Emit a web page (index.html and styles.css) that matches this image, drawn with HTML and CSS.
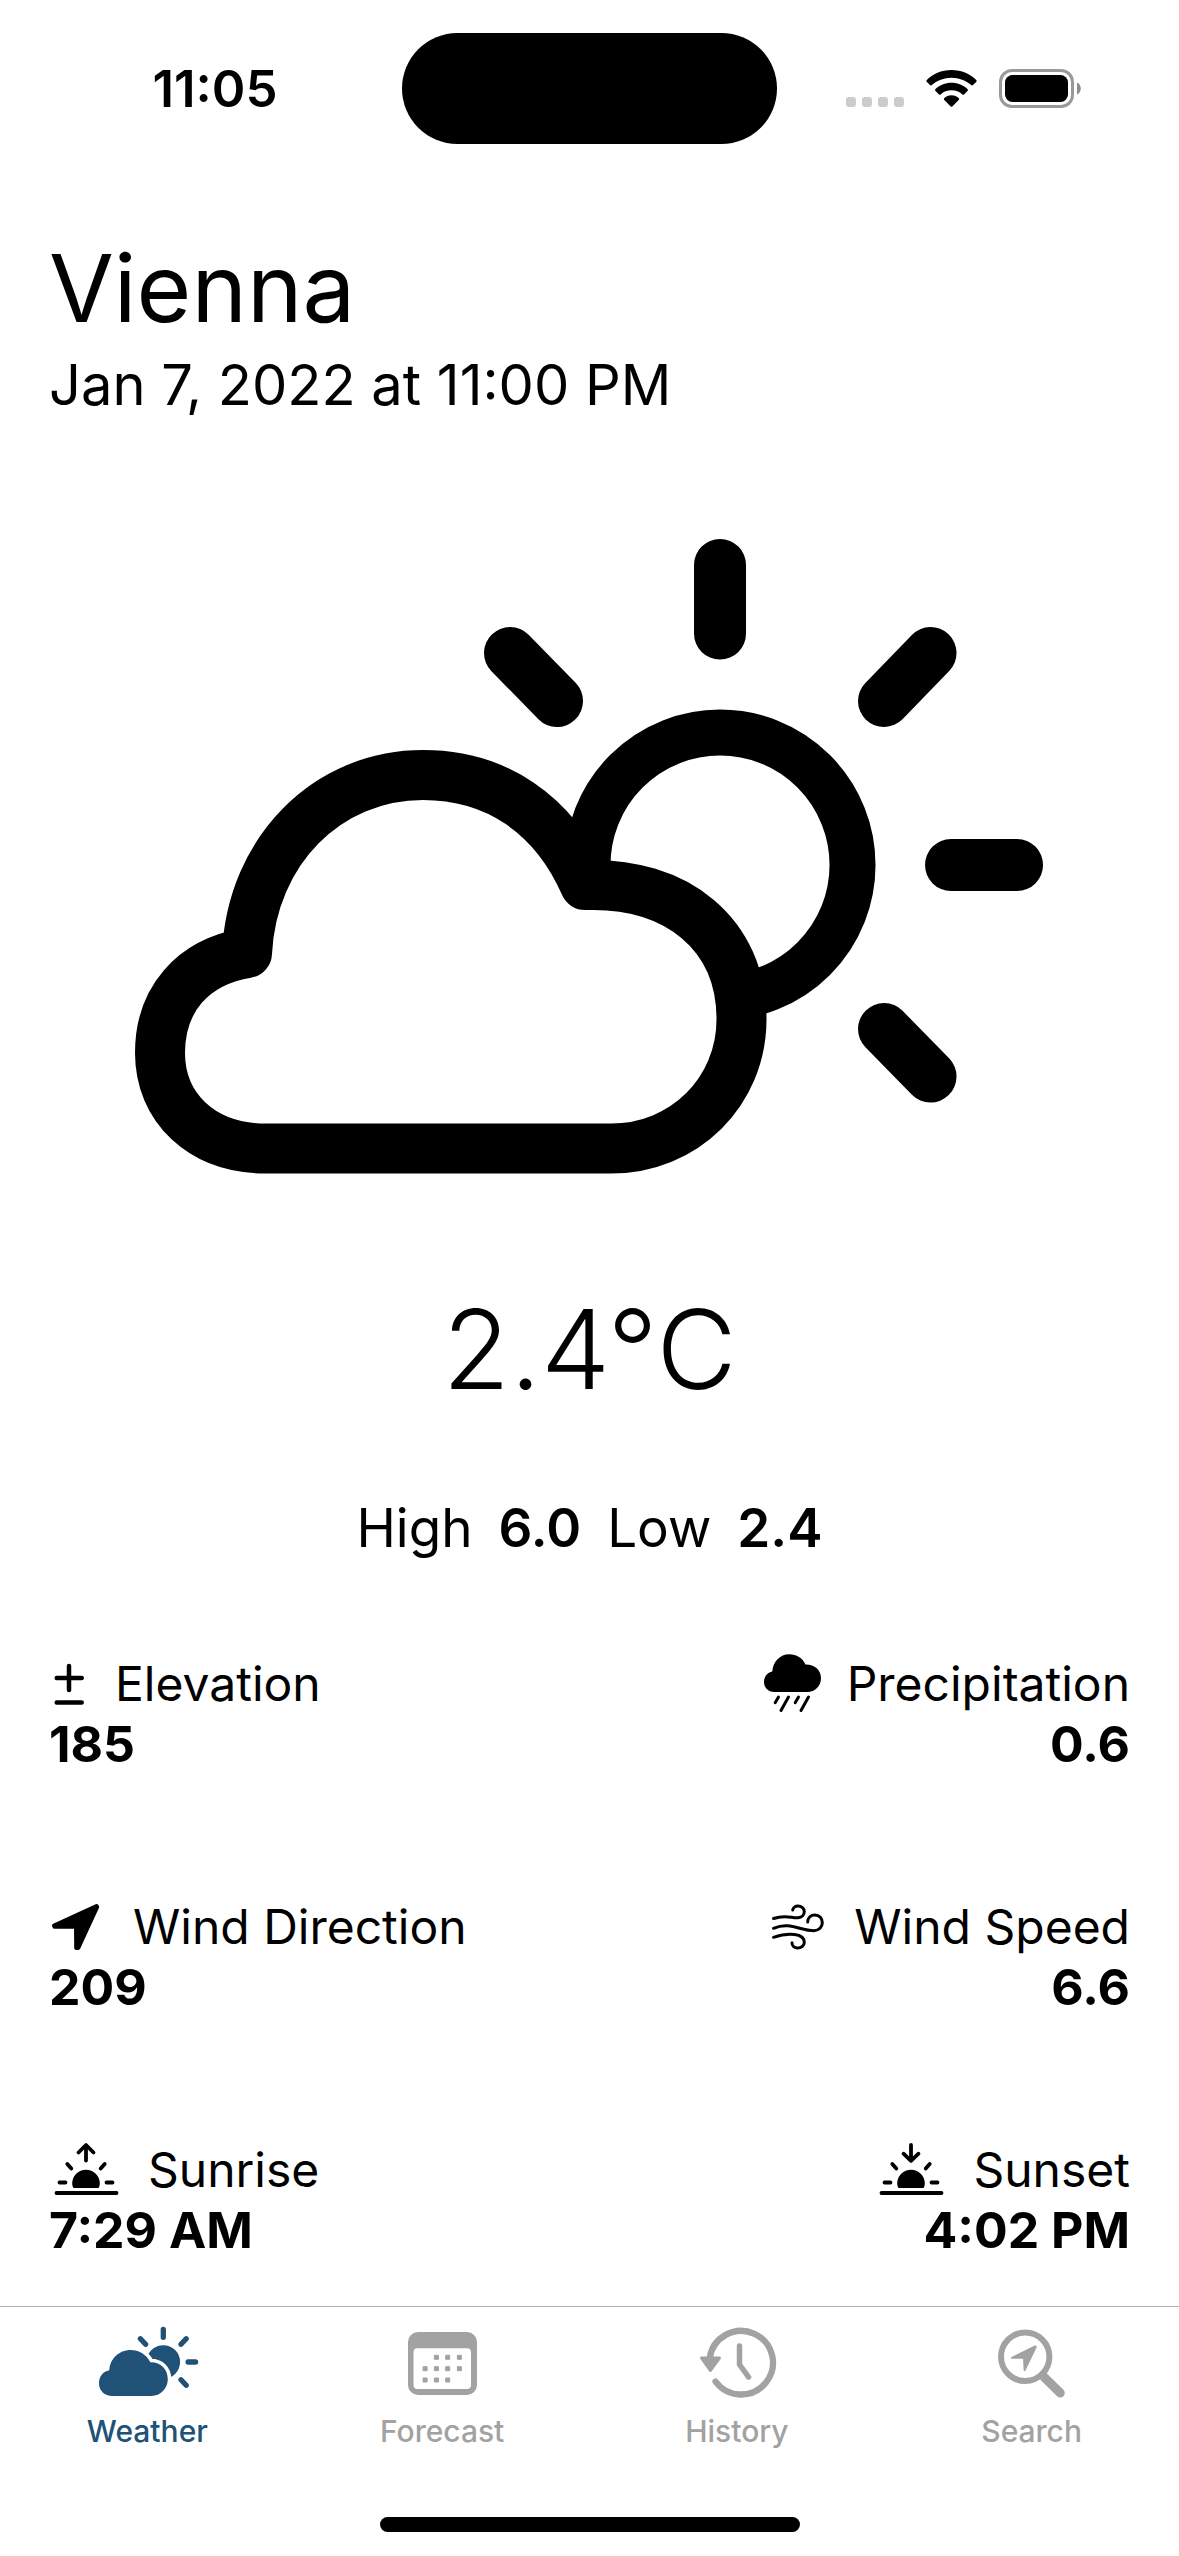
FILE: index.html
```html
<!DOCTYPE html>
<html lang="en">
<head>
<meta charset="utf-8">
<meta name="viewport" content="width=device-width, initial-scale=1">
<title>Vienna – Weather</title>
<link rel="stylesheet" href="styles.css">
</head>
<body>
<div class="screen">
  <header class="status">
    <time class="status-time">11:05</time>
    <div class="island"></div>
    <div class="status-icons">
      <svg width="58" height="39" viewBox="0 0 58 39" fill="#ccc" aria-hidden="true">
        <rect x="0" y="28" width="10" height="10" rx="3"/><rect x="16" y="28" width="10" height="10" rx="3"/><rect x="32" y="28" width="10" height="10" rx="3"/><rect x="48" y="28" width="10" height="10" rx="3"/>
      </svg>
      <svg width="51" height="39" viewBox="0 0 51 39" aria-label="Wi-Fi">
        <path d="M25.500 1C35.500 1 44.500 5 50.500 11.200Q51 12 50.300 12.700L46.800 16.200Q46 16.800 45.200 16.100C40 11.500 33 8.700 25.500 8.700S11 11.500 5.800 16.100Q5 16.800 4.200 16.200L.700 12.700Q0 12 .600 11.200C6.500 5 15.500 1 25.500 1Z"/>
        <path d="M25.500 13.700C31.800 13.700 37.500 16.200 41.700 20.200Q42.300 21 41.700 21.700L38 25.400Q37.200 26 36.400 25.400C33.500 22.800 29.700 21.300 25.500 21.300S17.500 22.800 14.600 25.400Q13.800 26 13 25.400L9.300 21.700Q8.700 21 9.300 20.200C13.500 16.200 19.200 13.700 25.500 13.700Z"/>
        <path d="M25.500 26.300C28.300 26.300 30.900 27.400 32.900 29.200Q33.500 30 32.900 30.700L26.300 37.400Q25.500 38.200 24.700 37.400L18.100 30.700Q17.500 30 18.100 29.200C20.100 27.400 22.700 26.300 25.500 26.300Z"/>
      </svg>
      <svg width="82" height="39" viewBox="0 0 82 39" aria-label="Battery full">
        <rect x="1.500" y="1.500" width="72" height="36" rx="11.500" fill="none" stroke="#999" stroke-width="3"/>
        <rect x="6" y="6" width="63" height="27" rx="7.500"/>
        <path d="M78 13.500C83 15.500 83 23.500 78 25.500Z" fill="#8c8c8c"/>
      </svg>
    </div>
  </header>

  <main class="weather">
    <h1 class="city">Vienna</h1>
    <p class="date">Jan 7, 2022 at 11:00 PM</p>

    <svg class="hero" viewBox="135 539 908 635" fill="none" stroke="#000" stroke-linecap="round" stroke-linejoin="round" role="img" aria-label="Partly cloudy">
      <circle cx="720" cy="865" r="132.500" stroke-width="46"/>
      <path stroke-width="52" d="M720 565V633.500M951 865H1017M510 653L557 701M930.500 653L884 701M884 1029L930.500 1076.500"/>
      <path stroke-width="50" fill="#fff" d="M266 1148.500C201 1148.500 160 1107 160 1053C160 1000 192 962 247 953C252 851 327 775 423 775C496 775 554 814 585 885C677 882 741.500 934 741.500 1019C741.500 1092 684 1148.500 611 1148.500Z"/>
    </svg>

    <p class="temperature">2.4°C</p>
    <p class="range"><span>High</span><b>6.0</b><span>Low</span><b>2.4</b></p>

    <dl class="details">
      <div class="detail">
        <dt><svg width="42" height="61" viewBox="0 0 42 61" class="line-icon" stroke-width="4.500" aria-hidden="true"><path d="M20 13V37M7.700 25H32.700M7.700 49.500H32.700"/></svg>Elevation</dt>
        <dd>185</dd>
      </div>
      <div class="detail">
        <dt><svg width="64" height="61" viewBox="0 0 64 61" class="line-icon" stroke-width="3" aria-hidden="true"><path fill="#000" stroke="none" d="M15.500 39C9 39 5 34.500 5 29C5 23.500 8.500 19.300 13.300 18.500C13.800 9 21 1.300 30.300 1.300C37.500 1.300 43.500 5 46.500 11.500C55.500 11.300 62 17 62 25.300C62 33 56 39 48.300 39Z"/><path d="M19.500 44L16.200 49.800M29.500 44L22 57.500M39.500 44L36.200 49.800M49.500 44L42 57.500"/></svg>Precipitation</dt>
        <dd>0.6</dd>
      </div>
      <div class="detail">
        <dt><svg width="60" height="61" viewBox="0 0 60 61" stroke="#000" stroke-width="4" stroke-linejoin="round" aria-hidden="true"><path d="M47.500 10L5 29.500L5.500 30.700H27L27.200 52L29.300 52L48.200 11Z"/></svg>Wind Direction</dt>
        <dd>209</dd>
      </div>
      <div class="detail">
        <dt><svg width="62" height="61" viewBox="0 0 62 61" class="line-icon" stroke-width="3" aria-hidden="true"><path d="M5.500 22.500C17 18.500 23 22 30 21.700C34 21.500 36.300 18.500 36.300 15.500C36.300 12.500 33.500 10 30 10C27.200 10 25 11.700 24.700 14M5.500 32.300C22 25.500 32 34.700 46 34.700C51 34.700 54.300 31 54.300 26.700C54.300 22.500 51.500 19 47 19C42.500 19 39.700 22 39.700 26M5.500 41.300C20 36.500 36.500 37 36.300 46.500C36.300 49.800 33 52 29.700 52C26 52 24 49.500 24 46.700"/></svg>Wind Speed</dt>
        <dd>6.6</dd>
      </div>
      <div class="detail">
        <dt><svg width="75" height="61" viewBox="0 0 75 61" class="line-icon" stroke-width="3.800" aria-hidden="true"><path d="M7.500 54H67.500M37 6.500V21.500M29.500 13.500L37 6L44.500 13.500M10.500 43.500H16.500M57.500 43.500H63.500M18.300 25L22.300 29.500M55.700 25L51.700 29.500"/><path fill="#000" stroke="none" d="M24.500 49Q23.200 47.500 23.200 44.500A13.800 13.800 0 0 1 50.800 44.500Q50.800 47.500 49.500 49Z"/></svg>Sunrise</dt>
        <dd>7:29 AM</dd>
      </div>
      <div class="detail">
        <dt><svg width="75" height="61" viewBox="0 0 75 61" class="line-icon" stroke-width="3.800" aria-hidden="true"><path d="M7.500 54H67.500M37 6V21M29.500 14.700L37 21.800L44.500 14.700M10.500 43.500H16.500M57.500 43.500H63.500M18.300 25L22.300 29.500M55.700 25L51.700 29.500"/><path fill="#000" stroke="none" d="M24.500 49Q23.200 47.500 23.200 44.500A13.800 13.800 0 0 1 50.800 44.500Q50.800 47.500 49.500 49Z"/></svg>Sunset</dt>
        <dd>4:02 PM</dd>
      </div>
    </dl>
  </main>

  <footer class="bottom">
    <nav class="tabs">
      <a class="tab tab-active" href="#weather" aria-current="page">
        <svg width="120" height="80" viewBox="0 0 120 80" fill="currentColor" aria-hidden="true">
          <circle cx="76.300" cy="42" r="16.800"/>
          <path fill="none" stroke="currentColor" stroke-width="5.300" stroke-linecap="round" d="M76.300 9.400V17.300M101.100 42H108.600M53.400 18.700L58.600 24.300M99.200 18.700L94 24.300M94 59.700L99.200 65.300"/>
          <path stroke="#fff" stroke-width="7" paint-order="stroke" d="M25.500 76C17.500 76 12 70.500 12 63.500C12 56.500 16 51.500 22.300 50.300C22.800 39 32 30 43.500 30C52 30 59.500 34.500 63.300 42.300C73.500 42 80.800 49 80.800 59.300C80.800 68.500 73.500 76 64.500 76Z"/>
        </svg>
        Weather
      </a>
      <a class="tab" href="#forecast">
        <svg width="120" height="80" viewBox="0 0 120 80" fill="currentColor" aria-hidden="true">
          <path fill-rule="evenodd" d="M36 12H85A10 10 0 0 1 95 22V65A10 10 0 0 1 85 75H36A10 10 0 0 1 26 65V22A10 10 0 0 1 36 12ZM35.500 28.300A4 4 0 0 0 31.500 32.300V65A4 4 0 0 0 35.500 69H85A4 4 0 0 0 89 65V32.300A4 4 0 0 0 85 28.300Z"/>
          <path stroke="currentColor" stroke-width="1" stroke-linejoin="round" d="M52.400 35.300h4v4h-4zM63.700 35.300h4v4h-4zM75.400 35.300h4v4h-4zM41.100 46.700h4v4h-4zM52.400 46.700h4v4h-4zM63.700 46.700h4v4h-4zM75.400 46.700h4v4h-4zM41.100 58h4v4h-4zM52.400 58h4v4h-4zM63.700 58h4v4h-4z"/>
        </svg>
        Forecast
      </a>
      <a class="tab" href="#history">
        <svg width="120" height="80" viewBox="0 0 120 80" fill="none" stroke="currentColor" stroke-linecap="round" stroke-linejoin="round" aria-hidden="true">
          <path stroke-width="6.300" d="M32.700 38A31.800 31.800 0 1 1 38.500 61.500"/>
          <path stroke-width="5.500" d="M62.500 26V44.500L71.500 57"/>
          <path fill="currentColor" stroke-width="3" d="M24.500 38H42.500L33.300 50.500Z"/>
        </svg>
        History
      </a>
      <a class="tab" href="#search">
        <svg width="120" height="80" viewBox="0 0 120 80" fill="none" stroke="currentColor" stroke-linecap="round" stroke-linejoin="round" aria-hidden="true">
          <circle cx="53.200" cy="36.800" r="24.200" stroke-width="6"/>
          <path stroke-width="9" d="M72 57L88.300 73"/>
          <path fill="currentColor" stroke-width="2" d="M63.200 26.500L40 37.800H52L52.600 50L63.700 27Z"/>
        </svg>
        Search
      </a>
    </nav>
    <div class="home-indicator"></div>
  </footer>
</div>
</body>
</html>
```
FILE: styles.css
```css
* {
  box-sizing: border-box;
  margin: 0;
}

body {
  background: #fff;
  color: #000;
  font-family: Inter, "Liberation Sans", sans-serif;
}

.screen {
  display: flex;
  flex-direction: column;
  min-height: 100vh;
}

svg {
  display: block;
  flex: none;
}

/* Status bar */
.status {
  display: grid;
  grid-template-columns: 1fr 375px 1fr;
  align-items: center;
  padding-top: 33px;
}

.status-time {
  padding-left: 28px;
  text-align: center;
  font-size: 51px;
  font-weight: 600;
  line-height: 60px;
}

.island {
  height: 111px;
  border-radius: 56px;
  background: #000;
}

.status-icons {
  display: flex;
  justify-content: flex-end;
  gap: 22px;
  padding-right: 98px;
}

/* Current conditions */
.weather {
  display: flex;
  flex-direction: column;
  padding: 83px 49px 44px;
}

.city {
  font-size: 94px;
  font-weight: 400;
  line-height: 122px;
}

.date {
  font-size: 56px;
  line-height: 72px;
}

.hero {
  width: 84%;
  margin-top: 118px;
  align-self: center;
}

.temperature {
  margin-top: 103px;
  text-align: center;
  font-size: 110px;
  font-weight: 300;
  line-height: 144px;
}

.range {
  display: flex;
  justify-content: center;
  gap: 26px;
  margin-top: 73px;
  font-size: 53px;
  line-height: 68px;
}

.range b {
  font-weight: 600;
}

.details {
  display: grid;
  grid-template-columns: auto auto;
  justify-content: space-between;
  row-gap: 121px;
  margin-top: 91px;
  font-size: 48px;
  line-height: 61px;
}

.detail:nth-child(even) {
  text-align: right;
}

.detail dt {
  display: flex;
  gap: 24px;
}

.detail:nth-child(even) dt {
  justify-content: flex-end;
}

.detail dd {
  font-size: 50px;
  font-weight: 700;
}

.line-icon {
  fill: none;
  stroke: #000;
  stroke-linecap: round;
  stroke-linejoin: round;
}

/* Tab bar */
.bottom {
  margin-top: auto;
  padding-bottom: 24px;
  border-top: 1px solid #b2b2b2;
}

.tabs {
  display: grid;
  grid-template-columns: repeat(4, 1fr);
  padding-top: 13px;
}

.tab {
  display: flex;
  flex-direction: column;
  align-items: center;
  gap: 13px;
  color: #a2a2a2;
  font-size: 30px;
  font-weight: 500;
  line-height: 36px;
  text-decoration: none;
}

.tab-active {
  color: #205177;
}

.home-indicator {
  width: 420px;
  height: 15px;
  margin: 68px auto 0;
  border-radius: 8px;
  background: #000;
}
```
